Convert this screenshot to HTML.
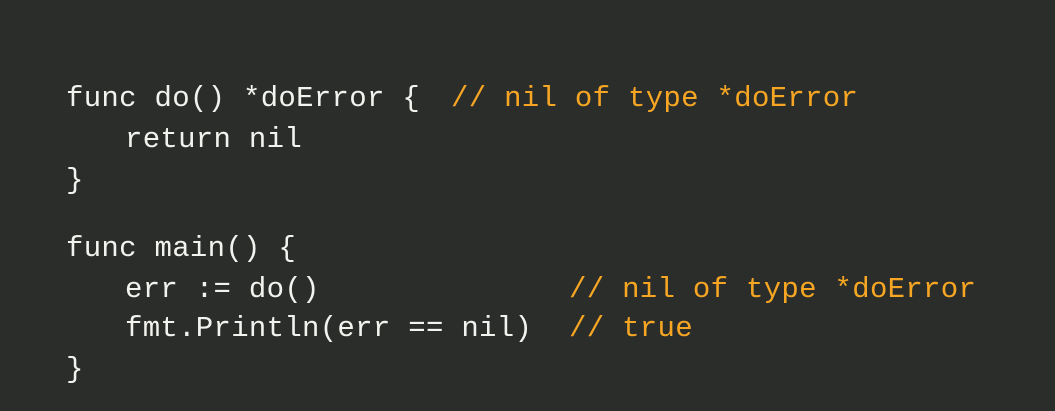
<!DOCTYPE html>
<html><head><meta charset="utf-8"><style>
html,body{margin:0;padding:0}
body{width:1055px;height:411px;background:#2b2d2b;position:relative;overflow:hidden;font-family:"Liberation Mono",monospace;font-size:29px;line-height:29px;color:#f2f2ee}
span{position:absolute;white-space:pre;letter-spacing:0.3px}
.c{color:#f6a623}
</style></head><body>
<span style="left:66px;top:84px">func do() *doError {</span>
<span class="c" style="left:451px;top:84px">// nil of type *doError</span>
<span style="left:125px;top:125px">return nil</span>
<span style="left:66px;top:166px">}</span>
<span style="left:66px;top:234px">func main() {</span>
<span style="left:125px;top:275px">err := do()</span>
<span class="c" style="left:569px;top:275px">// nil of type *doError</span>
<span style="left:125px;top:314px">fmt.Println(err == nil)</span>
<span class="c" style="left:569px;top:314px">// true</span>
<span style="left:66px;top:355px">}</span>
</body></html>
